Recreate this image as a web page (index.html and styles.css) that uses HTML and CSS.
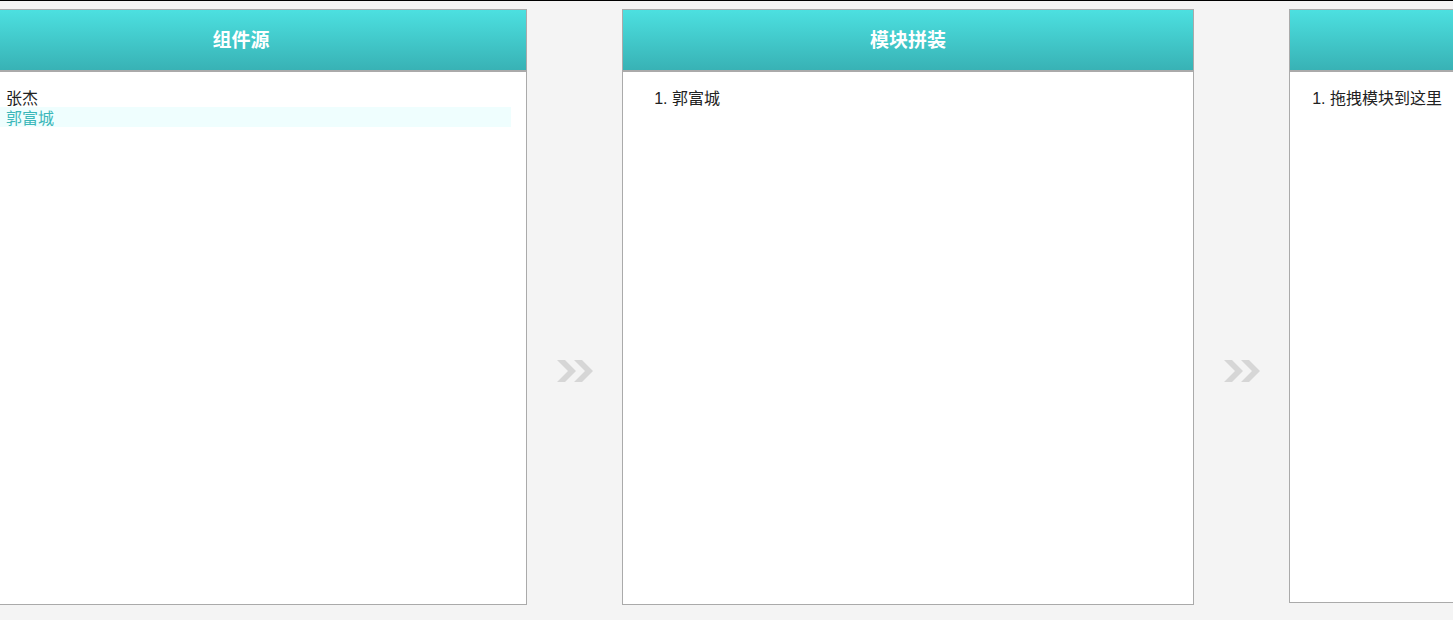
FILE: index.html
```html
<!DOCTYPE html>
<html lang="zh">
<head>
<meta charset="utf-8">
<title>模块拼装</title>
<link rel="stylesheet" href="styles.css">
</head>
<body>
<div class="board">
  <section class="panel">
    <header class="panel-head">组件源</header>
    <ul class="source-list">
      <li class="item">张杰</li>
      <li class="item active">郭富城</li>
    </ul>
  </section>
  <div class="gap">
    <svg class="arrow" width="36" height="22" viewBox="0 0 36 22" aria-hidden="true">
      <polygon points="0,0 8,0 19,11 8,22 0,22 11,11" fill="#d6d6d6"/>
      <polygon points="17,0 25,0 36,11 25,22 17,22 28,11" fill="#d6d6d6"/>
    </svg>
  </div>
  <section class="panel">
    <header class="panel-head">模块拼装</header>
    <ol class="build-list">
      <li>郭富城</li>
    </ol>
  </section>
  <div class="gap">
    <svg class="arrow" width="36" height="22" viewBox="0 0 36 22" aria-hidden="true">
      <polygon points="0,0 8,0 19,11 8,22 0,22 11,11" fill="#d6d6d6"/>
      <polygon points="17,0 25,0 36,11 25,22 17,22 28,11" fill="#d6d6d6"/>
    </svg>
  </div>
  <section class="panel panel-last">
    <header class="panel-head"></header>
    <ol class="drop-list">
      <li>拖拽模块到这里</li>
    </ol>
  </section>
</div>
</body>
</html>
```
FILE: styles.css
```css
html, body {
  margin: 0;
  padding: 0;
}
body {
  background: #f4f4f4;
  border-top: 1px solid #000;
  font-family: "Liberation Sans", "Noto Sans CJK SC", sans-serif;
  font-size: 16px;
  color: #222;
  overflow: hidden;
  height: 619px;
}
.board {
  display: flex;
  align-items: flex-start;
  padding-top: 8px;
  margin-left: -45px;
  width: max-content;
}
.panel {
  box-sizing: border-box;
  width: 572px;
  height: 596px;
  flex: none;
  background: #fff;
  border: 1px solid #aaa;
}
.panel-last {
  height: 594px;
}
.panel-head {
  height: 60px;
  line-height: 58px;
  text-align: center;
  color: #fff;
  font-weight: bold;
  font-size: 19px;
  font-family: "Noto Sans CJK SC", sans-serif;
  background: linear-gradient(#4ce0e0, #38b2b5);
  border-bottom: 2px solid #aaa;
}
.gap {
  flex: none;
  width: 95px;
  display: flex;
  justify-content: center;
  padding-top: 351px;
}
.arrow {
  display: block;
  margin-left: 1px;
}
.source-list {
  list-style: none;
  margin: 15px 15px 0 15px;
  padding: 0;
}
.item {
  height: 20px;
  line-height: 24px;
  padding-left: 35px;
}
.item.active {
  background: #effefe;
  color: #3cb7b9;
}
.build-list,
.drop-list {
  margin: 15px 0 0 0;
  line-height: 24px;
}
.build-list {
  padding-left: 49px;
}
.drop-list {
  padding-left: 40px;
}
```
